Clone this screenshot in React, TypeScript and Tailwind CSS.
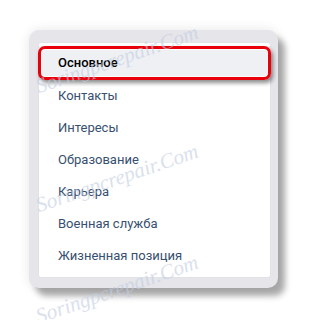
const items = [
  'Контакты',
  'Интересы',
  'Образование',
  'Карьера',
  'Военная служба',
  'Жизненная позиция',
];

const marks = ['top-[47px]', 'top-[166px]', 'top-[277px]'];

export default function App() {
  return (
    <div
      className="relative w-[309px] h-[320px] bg-white overflow-hidden pt-[30px] pl-[29px]"
      style={{ fontFamily: 'Roboto, "Liberation Sans", sans-serif' }}
    >
      {/* Frame with drop shadow */}
      <div className="w-[249px] h-[258px] rounded-[10px] bg-[#e5e5ea] pt-[12px] pl-[9px] pr-[7px] pb-[10px] shadow-[7px_8px_6px_rgba(0,0,0,0.33),0_0_12px_rgba(0,0,0,0.1)]">
        <div className="h-full bg-white rounded-[3px] border border-[#dfe2e7] pt-[3px]">
          {/* Selected item */}
          <div className="relative h-[34px] flex items-center pl-[19px] bg-[#eef0f3] text-[13px] font-medium text-black">
            Основное
            <div className="absolute -left-[1px] -right-[1px] top-0 bottom-0 rounded-[7px] border-[3px] border-[#e8000b] shadow-[2px_3px_4px_rgba(0,0,0,0.45),inset_0_0_0_1px_#fff]" />
          </div>
          {items.map((item) => (
            <div key={item} className="h-[32px] flex items-center pl-[19px] text-[13px] text-[#37506f]">
              {item}
            </div>
          ))}
        </div>
      </div>

      {/* Watermarks */}
      {marks.map((m) => (
        <div
          key={m}
          className={`absolute left-[25px] ${m} w-[184px] text-center -rotate-[19deg] italic text-[21px] leading-[24px] text-[#c3cde2] opacity-60 pointer-events-none`}
          style={{ fontFamily: '"Liberation Serif", serif' }}
        >
          Soringpcrepair.Com
        </div>
      ))}
    </div>
  );
}
